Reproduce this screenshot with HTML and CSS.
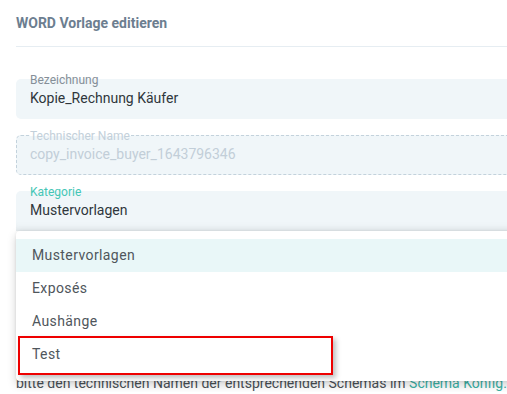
FILE: index.html
```html
<!DOCTYPE html>
<html lang="de">
<head>
  <meta charset="UTF-8" />
  <title>WORD Vorlage editieren</title>
  <link rel="stylesheet" href="styles.css">
</head>
<body>
  <div class="page">
    <h2 class="titel">WORD Vorlage editieren</h2>

    <div class="formular">
      <div class="feld">
        <span class="feld-label">Bezeichnung</span>
        <span class="feld-wert">Kopie_Rechnung Käufer</span>
      </div>

      <div class="feld feld-gesperrt">
        <span class="feld-label">Technischer Name</span>
        <span class="feld-wert">copy_invoice_buyer_1643796346</span>
      </div>

      <div class="auswahl">
        <div class="feld feld-aktiv">
          <span class="feld-label">Kategorie</span>
          <span class="feld-wert">Mustervorlagen</span>
        </div>

        <ul class="menu">
          <li class="menu-eintrag gewaehlt">Mustervorlagen</li>
          <li class="menu-eintrag">Exposés</li>
          <li class="menu-eintrag">Aushänge</li>
          <li class="menu-eintrag">Test</li>
        </ul>
      </div>

      <p class="hinweis">bitte den technischen Namen der entsprechenden Schemas im <a href="#">Schema Konfig.</a></p>
    </div>
  </div>

  <div class="markierung"></div>
</body>
</html>
```

FILE: styles.css
```css
html, body {
  overflow: hidden;
}

body {
  font-family: Roboto, "Liberation Sans", Arial, sans-serif;
  background-color: #ffffff;
  color: #333a40;
  margin: 0;
  padding: 0 0 0 16px;
}

.page {
  width: 620px;
}

.titel {
  margin: 0;
  padding: 12px 0 11px;
  font-size: 14px;
  line-height: 23px;
  font-weight: 700;
  color: #6c7e90;
  border-bottom: 1px solid #e6edf2;
}

.formular {
  padding-top: 32px;
  display: flex;
  flex-direction: column;
  gap: 16px;
}

/* Eingabefelder */
.feld {
  position: relative;
  height: 40px;
  box-sizing: border-box;
  padding: 9px 14px 0;
  background-color: #f0f6f9;
  border-radius: 5px;
}

.feld-label {
  position: absolute;
  top: -6px;
  left: 14px;
  font-size: 12px;
  line-height: 14px;
  color: #858f98;
}

.feld-wert {
  display: block;
  font-size: 14px;
  line-height: 20px;
  color: #2f363c;
}

.feld-gesperrt {
  border: 1px dashed #c3d2dc;
  padding-top: 8px;
  padding-left: 13px;
}
.feld-gesperrt .feld-label {
  left: 13px;
  top: -7px;
  padding-right: 1px;
  color: #c3d0da;
  background: linear-gradient(#ffffff 50%, #f0f6f9 50%);
}
.feld-gesperrt .feld-wert {
  color: #c2ced8;
}

.feld-aktiv {
  border-radius: 5px 5px 0 0;
  box-shadow: inset 0 -9px 8px -7px rgba(0, 0, 0, 0.07);
}
.feld-aktiv .feld-label {
  color: #45c6b6;
}

/* Dropdown */
.auswahl {
  position: relative;
}

.menu {
  position: absolute;
  top: 40px;
  left: 0;
  right: 0;
  z-index: 2;
  margin: 0;
  padding: 8px 0 10px;
  list-style: none;
  background-color: #ffffff;
  border-radius: 4px;
  box-shadow: 0 4px 10px rgba(0, 0, 0, 0.18), 0 0 3px rgba(0, 0, 0, 0.08);
}

.menu-eintrag {
  height: 33px;
  line-height: 33px;
  padding-left: 16px;
  font-size: 14px;
  letter-spacing: 0.4px;
  color: #4f565c;
}

.menu-eintrag.gewaehlt {
  background-color: #e9f7f8;
}

.hinweis {
  margin: 127px 0 0;
  font-size: 14px;
  line-height: 18px;
  color: #4a5157;
  white-space: nowrap;
}
.hinweis a {
  color: #3bb1a5;
  text-decoration: none;
}

/* rote Markierung über dem Eintrag "Test" */
.markierung {
  position: absolute;
  left: 18px;
  top: 336px;
  width: 311px;
  height: 35px;
  border: 2px solid #ee0000;
  z-index: 3;
  box-shadow: 3px 3px 5px rgba(0, 0, 0, 0.25);
}
```
